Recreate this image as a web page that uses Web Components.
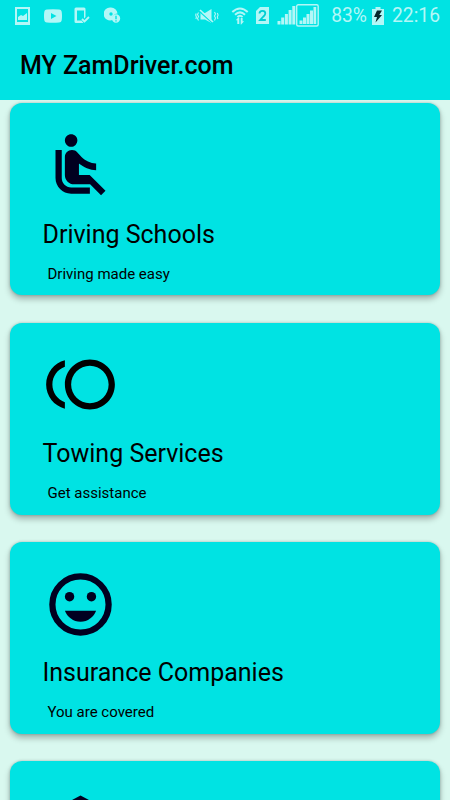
<!DOCTYPE html>
<html lang="en">
<head>
<meta charset="utf-8">
<title>MY ZamDriver.com</title>
<style>
	html, body {
		margin: 0;
		height: 100%;
		overflow: hidden;
	}
	body {
		background: #d9f8ef;
		font-family: Roboto, "Liberation Sans", sans-serif;
		color: #000;
	}
</style>
</head>
<body>
<zam-app></zam-app>

<script>
// Inner markup of the 24x24 icons used on the service cards
const ICONS = {
	seat: '<path d="M7.59 5.41c-.78-.78-.78-2.05 0-2.83.78-.78 2.05-.78 2.83 0 .78.78.78 2.05 0 2.83-.79.79-2.05.79-2.83 0zM6 16V7H4v9c0 2.76 2.24 5 5 5h6v-2H9c-1.66 0-3-1.34-3-3zm14 4.07L14.93 15H11.5v-3.68c1.4 1.15 3.6 2.16 5.5 2.16v-2.16c-1.66.02-3.61-.87-4.67-2.04l-1.4-1.55c-.19-.21-.43-.38-.69-.5-.29-.14-.62-.23-.96-.23h-.03C8.01 7 7 8.01 7 9.25V15c0 1.66 1.34 3 3 3h5.07l3.5 3.5L20 20.07z"/>',
	toll: '<path d="M15 4c-4.42 0-8 3.58-8 8s3.58 8 8 8 8-3.58 8-8-3.58-8-8-8zm0 14c-3.31 0-6-2.69-6-6s2.69-6 6-6 6 2.69 6 6-2.69 6-6 6zM3 12c0-2.61 1.67-4.83 4-5.65V4.26C3.55 5.15 1 8.27 1 12s2.55 6.85 6 7.74v-2.09c-2.33-.82-4-3.04-4-5.65z"/>',
	smile: '<circle cx="12" cy="12" r="9" fill="none" stroke="currentColor" stroke-width="2"/><circle cx="8.5" cy="9.5" r="1.5"/><circle cx="15.5" cy="9.5" r="1.5"/><path d="M7 14h10c-.8 2.04-2.67 3.5-5 3.5S7.8 16.04 7 14z"/>',
	school: '<path d="M5 13.18v4L12 21l7-3.82v-4L12 17l-7-3.82zM12 3L1 9l11 6 9-4.91V17h2V9L12 3z"/>'
};

// Phone status bar: notifications on the left, system state on the right
class StatusBar extends HTMLElement {
	constructor() {
		super();
		this.attachShadow({ mode: 'open' }).innerHTML = `
			<style>
				:host {
					display: flex;
					align-items: center;
					height: 31px;
					padding: 0 10px 0 14px;
					box-sizing: border-box;
					color: #b3f7f7;
					font-size: 19.3px;
					line-height: 33px;
					white-space: nowrap;
				}
				svg {
					display: block;
					flex: none;
					fill: currentColor;
				}
				.space {
					flex: 1;
				}
				.percent {
					margin-left: 12.5px;
				}
				.clock {
					margin-left: 8px;
				}
			</style>
			<!-- picture -->
			<svg width="16" height="18" viewBox="0 0 16 18"><path fill-rule="evenodd" d="M1 0h15v18H1zM3 2v13h11V2z"/><path d="M4 13V10l3-2 2 1 4-3v7z"/></svg>
			<!-- video -->
			<svg width="18" height="14" viewBox="0 0 18 14" style="margin-left:13.5px"><path fill-rule="evenodd" d="M3 .6Q9 0 15 .6q2.6.2 2.8 3Q18.2 7 17.8 10.4q-.2 2.8-2.8 3Q9 14 3 13.4q-2.6-.2-2.8-3Q-.2 7 .2 3.6.4.8 3 .6zM7 4v6l5.5-3z"/></svg>
			<!-- device check -->
			<svg width="16" height="18" viewBox="0 0 16 18" style="margin-left:12.5px"><path fill-rule="evenodd" d="M2 .5h8q1.5 0 1.5 1.5V10L10 11.5V3.500H3v10h4.500l2 2.500H2Q.5 16 .5 14.500V2Q.5.5 2 .5z"/><path d="M8 12l2.5 2.5L15 10" fill="none" stroke="currentColor" stroke-width="1.9"/></svg>
			<!-- disc alert -->
			<svg width="17" height="17" viewBox="0 0 17 17" style="margin-left:14px"><path fill-rule="evenodd" d="M7 .5a6.5 6.5 0 0 1 6.5 6a5 5 0 0 0-5 6.5A6.5 6.5 0 1 1 7 .5zM7 5.300a1.700 1.700 0 1 0 0 3.400a1.700 1.700 0 1 0 0-3.400z"/><path fill-rule="evenodd" d="M12 7.300a4.200 4.200 0 1 1 0 8.400a4.200 4.200 0 1 1 0-8.400zM11.300 8.700v3.600h1.400V8.700zM11.300 13.200v1.300h1.400v-1.300z"/></svg>
			<span class="space"></span>
			<!-- vibrate, muted -->
			<svg width="24" height="16" viewBox="0 0 24 16"><path d="M5.500 5h4.500L16.500 1v14L10 11.500H5.500z"/><path d="M4.500 3.500l13 11.500" stroke="#00e3e3" stroke-width="1.400"/><path d="M5 2l13 12" stroke="currentColor" stroke-width="1.700"/><path d="M3.500 4.500l-1 2 1 2-1 2 1 2M1.200 5.500L.7 7l.7 2-.5 2M19.500 4l1 2-1 2 1 2-1 2.500M22.300 5l.8 2-.8 2 .6 2" fill="none" stroke="currentColor" stroke-width="1.100"/></svg>
			<!-- wifi -->
			<svg width="18" height="19" viewBox="0 0 18 19" style="margin-left:12px"><path d="M1.300 6Q9-1 16.700 6M4 8.700q5-4.700 10 0M6.400 11Q9 8.500 11.600 11" fill="none" stroke="currentColor" stroke-width="2"/><path d="M7.200 11.500L4.800 14.300h1.500V18h2v-6.500zM9.700 12v6.500h.5l2.900-3.200h-1.500V12z"/></svg>
			<!-- SIM card 2 -->
			<svg width="13" height="17" viewBox="0 0 13 17" style="margin-left:7px"><path d="M4 0h9v17H0V4z"/><path d="M3.500 6.500q0-2.700 3-2.700 2.800 0 2.800 2.500 0 1.500-1.800 3.200L4.200 13h5.600" fill="none" stroke="#00cfd3" stroke-width="1.800"/></svg>
			<!-- signal, both SIMs -->
			<svg width="42" height="23" viewBox="0 0 42 23" style="margin-left:8px"><path d="M.5 17h3v3.500h-3zM4.200 13.500h3v7h-3zM7.900 10h3v10.500h-3zM11.600 6h3v14.500h-3zM15.300 2h3v18.500h-3zM22.500 16.500h3V20h-3zM26 13.500h3V20h-3zM29.500 10h3v10h-3zM33 6.500h3V20h-3zM36.500 3h2.700v17h-2.700z"/><rect x="19.700" y=".7" width="21.500" height="21.300" rx="1.500" fill="none" stroke="currentColor" stroke-width="1.400"/></svg>
			<span class="percent">83%</span>
			<!-- battery, charging -->
			<svg width="12" height="18" viewBox="0 0 12 18" style="margin-left:5px"><path d="M3.500 0h5v2H12v16H0V2h3.500z"/><path d="M5 3.500h5L7.300 8H10l-6.500 7.500L5 10H2z" fill="#06272b"/></svg>
			<span class="clock">22:16</span>
		`;
	}
}
customElements.define('status-bar', StatusBar);

// Title bar, the page name goes in the slot
class AppBar extends HTMLElement {
	constructor() {
		super();
		this.attachShadow({ mode: 'open' }).innerHTML = `
			<style>
				:host {
					display: flex;
					align-items: center;
					height: 69px;
					padding: 0 20px;
					box-sizing: border-box;
					font-size: 25px;
					font-weight: 500;
					white-space: nowrap;
				}
			</style>
			<slot></slot>
		`;
	}
}
customElements.define('app-bar', AppBar);

// <service-card icon="seat"><span slot="heading">...</span>note</service-card>
class ServiceCard extends HTMLElement {
	constructor() {
		super();
		this.attachShadow({ mode: 'open' });
	}

	connectedCallback() {
		const icon = ICONS[this.getAttribute('icon')];
		this.shadowRoot.innerHTML = `
			<style>
				:host {
					display: flex;
					flex-direction: column;
					align-items: flex-start;
					flex: none;
					height: 192px;
					padding: 24.8px 32.5px 0;
					box-sizing: border-box;
					border-radius: 12px;
					background: #00e3e3;
					box-shadow: 0 4px 6px rgba(0, 0, 0, .27), 0 0 3px rgba(0, 0, 0, .22);
				}
				svg {
					display: block;
					width: 75px;
					height: 75px;
					fill: currentColor;
					color: var(--icon-color, #000020);
				}
				h2 {
					margin: 16.7px 0 0;
					font-size: 25px;
					font-weight: 400;
					line-height: 30px;
					white-space: nowrap;
				}
				p {
					margin: 14px 0 0 5px;
					font-size: 15px;
					line-height: 20px;
				}
			</style>
			<svg viewBox="0 0 24 24">${icon}</svg>
			<h2><slot name="heading"></slot></h2>
			<p><slot></slot></p>
		`;
	}
}
customElements.define('service-card', ServiceCard);

// Whole screen: header and the list of services
class ZamApp extends HTMLElement {
	constructor() {
		super();
		this.attachShadow({ mode: 'open' }).innerHTML = `
			<style>
				:host {
					display: flex;
					flex-direction: column;
					height: 100vh;
					overflow: hidden;
				}
				header {
					flex: none;
					background: #00e3e3;
				}
				main {
					display: flex;
					flex-direction: column;
					flex: 1;
					min-height: 0;
					gap: 27.2px;
					padding: 3.4px 10px 0;
					overflow: hidden;
				}
				.black {
					--icon-color: #000;
				}
			</style>
			<header>
				<status-bar></status-bar>
				<app-bar>MY ZamDriver.com</app-bar>
			</header>
			<main>
				<service-card icon="seat"><span slot="heading">Driving Schools</span>Driving made easy</service-card>
				<service-card icon="toll" class="black"><span slot="heading">Towing Services</span>Get assistance</service-card>
				<service-card icon="smile"><span slot="heading">Insurance Companies</span>You are covered</service-card>
				<service-card icon="school"></service-card>
			</main>
		`;
	}
}
customElements.define('zam-app', ZamApp);
</script>
</body>
</html>
